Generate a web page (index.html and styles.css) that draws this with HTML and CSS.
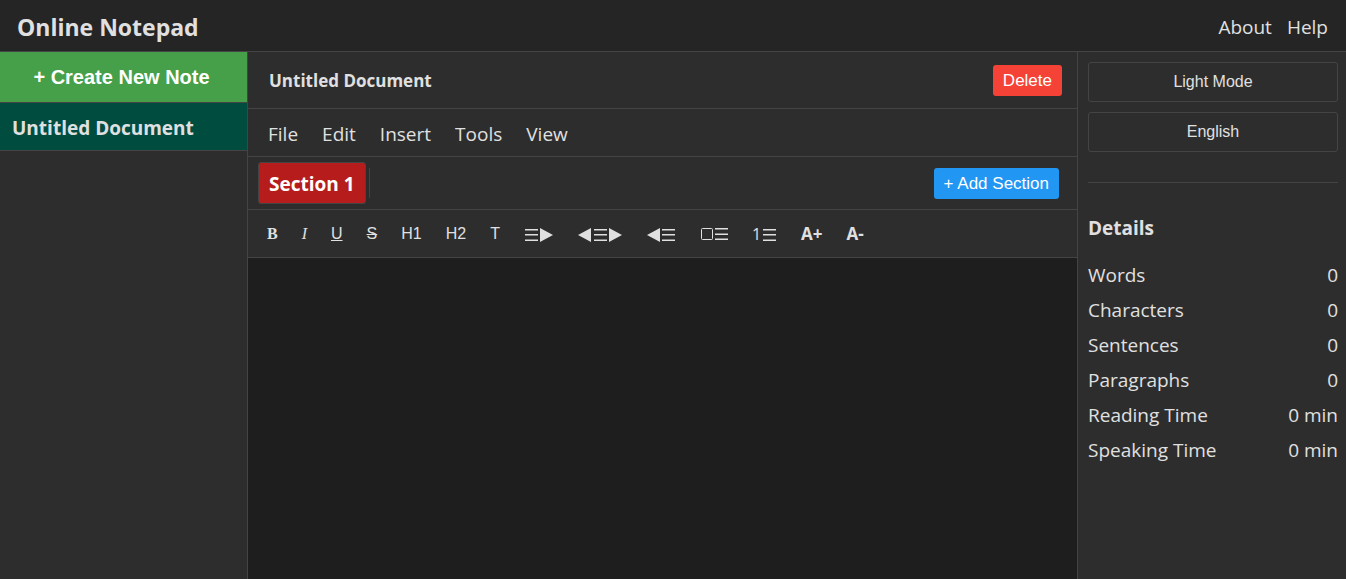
FILE: index.html
```html
<!DOCTYPE html>
<html lang="en">
<head>
    <meta charset="UTF-8">
    <meta name="viewport" content="width=device-width, initial-scale=1.0">
    <title>Online Notepad</title>
    <link rel="stylesheet" href="styles.css">
</head>
<body>
    <header class="header">
        <h1>Online Notepad</h1>
        <nav class="header-links">
            <a href="#about">About</a>
            <a href="#help">Help</a>
        </nav>
    </header>

    <div class="container">
        <aside class="sidebar">
            <button type="button" class="create-note">+ Create New Note</button>
            <ul class="note-list">
                <li><a href="#note-1" class="note active">Untitled Document</a></li>
            </ul>
        </aside>

        <main class="main">
            <div class="doc-header">
                <h2>Untitled Document</h2>
                <button type="button" class="btn delete-btn">Delete</button>
            </div>

            <div class="menu-bar">
                <button type="button">File</button>
                <button type="button">Edit</button>
                <button type="button">Insert</button>
                <button type="button">Tools</button>
                <button type="button">View</button>
            </div>

            <div class="section-bar">
                <div class="tabs">
                    <button type="button" class="tab">Section 1</button>
                </div>
                <button type="button" class="btn add-btn">+ Add Section</button>
            </div>

            <div class="toolbar">
                <button type="button" class="serif"><b>B</b></button>
                <button type="button" class="serif"><i>I</i></button>
                <button type="button"><u>U</u></button>
                <button type="button"><s>S</s></button>
                <button type="button">H1</button>
                <button type="button">H2</button>
                <button type="button">T</button>
                <button type="button" aria-label="Align left">
                    <svg width="29" height="17" viewBox="0 0 29 17">
                        <path class="line" d="M1 4.8h13M1 9.8h13M1 15.3h13"/>
                        <path d="M16 3v14l13-7z"/>
                    </svg>
                </button>
                <button type="button" aria-label="Align center">
                    <svg width="45" height="17" viewBox="0 0 45 17">
                        <path d="M14 3v14L1 10z"/>
                        <path class="line" d="M17 4.8h13M17 9.8h13M17 15.3h13"/>
                        <path d="M32 3v14l13-7z"/>
                    </svg>
                </button>
                <button type="button" aria-label="Align right">
                    <svg width="30" height="17" viewBox="0 0 30 17">
                        <path d="M14 3v14L1 10z"/>
                        <path class="line" d="M16 4.8h13M16 9.8h13M16 15.3h13"/>
                    </svg>
                </button>
                <button type="button" aria-label="Bullet list">
                    <svg width="28" height="17" viewBox="0 0 28 17">
                        <rect class="box" x="1.5" y="3.5" width="11" height="11" rx="1"/>
                        <path class="line" d="M15 3.8h13M15 9.2h13M15 14.2h13"/>
                    </svg>
                </button>
                <button type="button" class="numbered" aria-label="Numbered list">
                    <span>1</span>
                    <svg width="14" height="17" viewBox="0 0 14 17">
                        <path class="line" d="M0 4.8h13M0 9.8h13M0 15.3h13"/>
                    </svg>
                </button>
                <button type="button" class="size">A+</button>
                <button type="button" class="size">A-</button>
            </div>

            <textarea class="editor" aria-label="Note text"></textarea>
        </main>

        <aside class="details">
            <button type="button" class="option">Light Mode</button>
            <button type="button" class="option">English</button>
            <hr>
            <h3>Details</h3>
            <dl>
                <div><dt>Words</dt><dd>0</dd></div>
                <div><dt>Characters</dt><dd>0</dd></div>
                <div><dt>Sentences</dt><dd>0</dd></div>
                <div><dt>Paragraphs</dt><dd>0</dd></div>
                <div><dt>Reading Time</dt><dd>0 min</dd></div>
                <div><dt>Speaking Time</dt><dd>0 min</dd></div>
            </dl>
        </aside>
    </div>
</body>
</html>
```
FILE: styles.css
```css
* {
    box-sizing: border-box;
    margin: 0;
    padding: 0;
}
body {
    display: flex;
    flex-direction: column;
    min-height: 100vh;
    background-color: #2d2d2d;
    color: #e0e0e0;
    font-family: "Open Sans", "Noto Sans", sans-serif;
    font-size: 19px;
    line-height: 27px;
}
button {
    border: none;
    background: none;
    color: inherit;
    font-family: "Liberation Sans", Arial, sans-serif;
    cursor: pointer;
}
a {
    color: inherit;
    text-decoration: none;
}

/* Header */
.header {
    display: flex;
    justify-content: space-between;
    align-items: center;
    padding: 14px 18px 10px 17px;
    background-color: #252525;
    border-bottom: 1px solid #444;
}
.header h1 {
    font-size: 23px;
    line-height: 27px;
}
.header-links {
    display: flex;
    gap: 15px;
}

.container {
    display: flex;
    flex: 1;
}

/* Notes list */
.sidebar {
    width: 248px;
    border-right: 1px solid #444;
}
.create-note {
    display: block;
    width: 100%;
    height: 50px;
    padding-right: 4px;
    background-color: #45a049;
    color: #fff;
    font-size: 20px;
    font-weight: bold;
}
.note-list {
    list-style: none;
    border-top: 1px solid #444;
}
.note {
    display: block;
    padding: 12px 12px 8px;
    border-bottom: 1px solid #444;
    font-weight: bold;
}
.note.active {
    background-color: #004d40;
}

/* Editor column */
.main {
    display: flex;
    flex: 1;
    flex-direction: column;
    min-width: 0;
}
.doc-header, .menu-bar, .section-bar, .toolbar {
    display: flex;
    align-items: center;
    border-bottom: 1px solid #444;
}
.doc-header {
    justify-content: space-between;
    height: 57px;
    padding: 0 15px 0 21px;
}
.doc-header h2 {
    font-size: 17px;
}
.btn {
    height: 31px;
    padding: 2px 10px 0;
    border-radius: 3px;
    color: #fff;
    font-size: 17px;
}
.delete-btn {
    background-color: #f44336;
}
.add-btn {
    background-color: #2196f3;
}
.menu-bar {
    gap: 24px;
    height: 48px;
    padding: 4px 20px 0;
}
.menu-bar button {
    font-family: inherit;
    font-size: 19px;
    line-height: 27px;
}
.section-bar {
    justify-content: space-between;
    height: 53px;
    padding: 0 18px 0 10px;
}
.tabs {
    display: flex;
    align-items: center;
    gap: 3px;
}
.tabs::after {
    content: "";
    width: 1px;
    height: 30px;
    background-color: #444;
}
.tab {
    height: 42px;
    padding: 2px 10px 0;
    border: 1px solid #444;
    border-radius: 3px;
    background-color: #b71c1c;
    color: #fff;
    font-family: inherit;
    font-size: 19px;
    font-weight: bold;
}
.toolbar {
    gap: 4px;
    height: 48px;
    padding: 0 9px;
}
.toolbar button {
    padding: 0 10px;
    font-size: 16px;
    line-height: 20px;
}
.toolbar .serif {
    font-family: "Liberation Serif", "Times New Roman", serif;
}
.toolbar .size {
    font-family: inherit;
    font-size: 17px;
    font-weight: bold;
}
.toolbar .numbered {
    display: flex;
    align-items: center;
    gap: 2px;
    font-family: inherit;
}
.toolbar svg {
    display: block;
    fill: #e0e0e0;
}
.toolbar .line {
    fill: none;
    stroke: #e0e0e0;
    stroke-width: 1.5;
}
.toolbar .box {
    fill: none;
    stroke: #e0e0e0;
}
.editor {
    flex: 1;
    width: 100%;
    padding: 20px;
    border: none;
    outline: none;
    resize: none;
    background-color: #1e1e1e;
    color: inherit;
    font: inherit;
}

/* Right column */
.details {
    width: 269px;
    padding: 10px 8px 10px 10px;
    border-left: 1px solid #444;
}
.option {
    display: block;
    width: 100%;
    height: 40px;
    margin-bottom: 10px;
    border: 1px solid #444;
    border-radius: 3px;
    font-size: 16px;
}
.details hr {
    margin: 30px 0 32px;
    border: none;
    border-top: 1px solid #444;
}
.details h3 {
    margin-bottom: 20px;
    font-size: 19px;
}
.details dl {
    display: grid;
    gap: 8px;
}
.details dl div {
    display: flex;
    justify-content: space-between;
}
```
